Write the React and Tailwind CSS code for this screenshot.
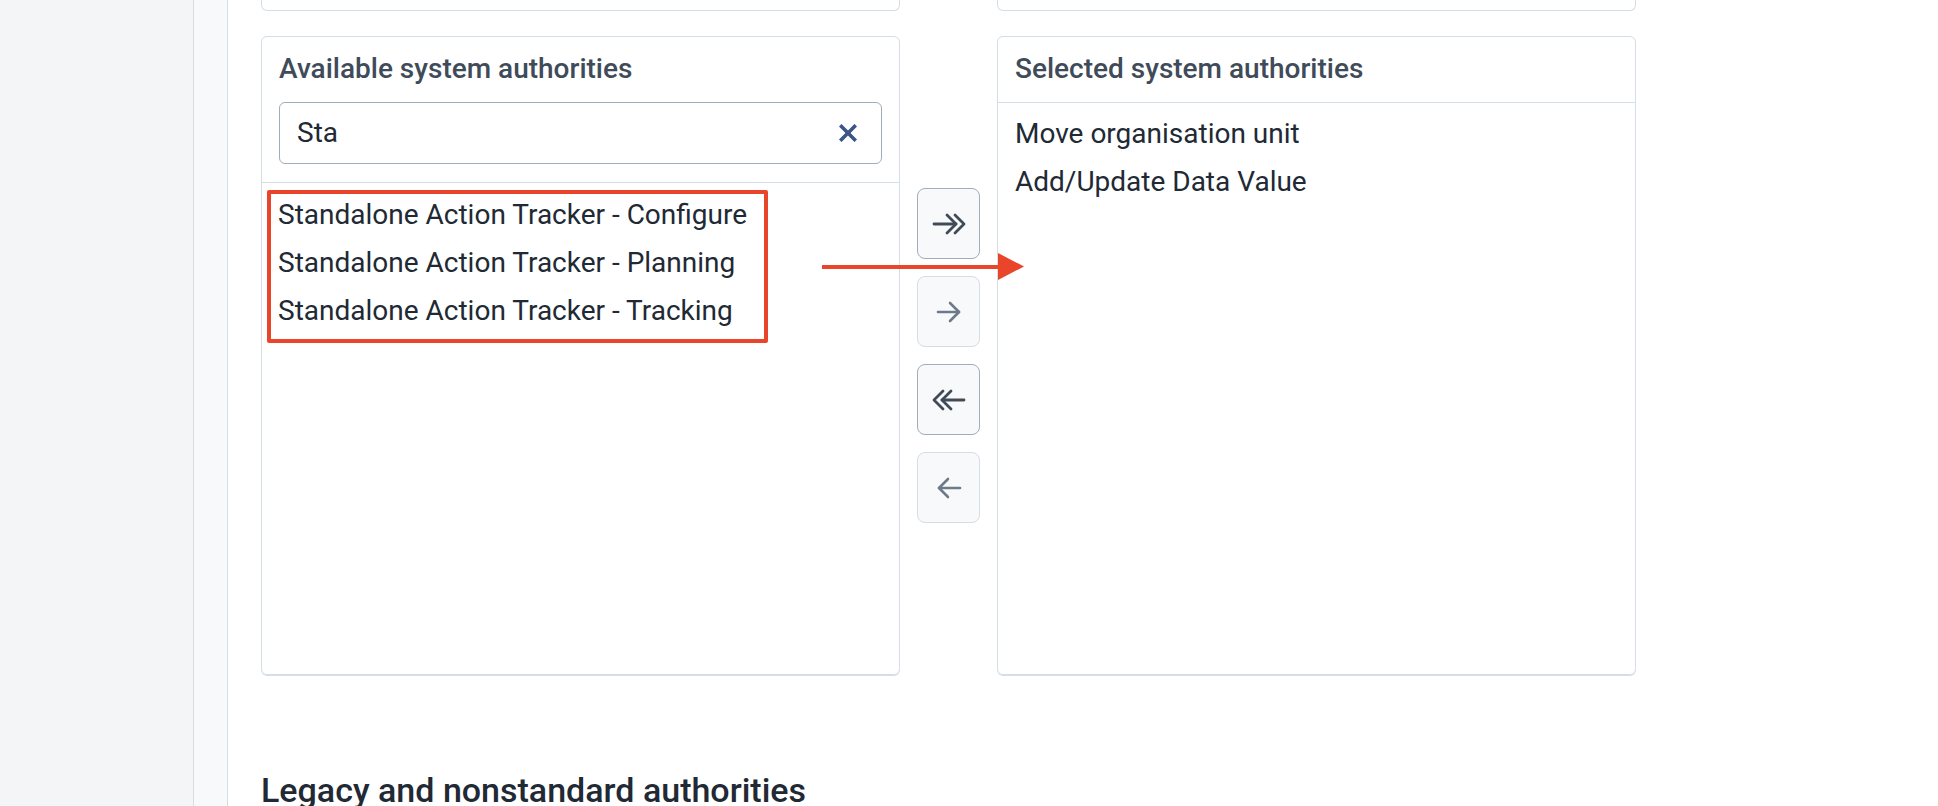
import React from "react";

const DoubleRight = ({ color }) => (
  <svg width="34" height="22" viewBox="0 0 34 22" fill="none" stroke={color} strokeWidth="2.8" strokeLinecap="round" strokeLinejoin="round">
    <path d="M2 11H24" />
    <path d="M15 2L24 11L15 20" />
    <path d="M23 2L32 11L23 20" />
  </svg>
);
const DoubleLeft = ({ color }) => (
  <svg width="34" height="22" viewBox="0 0 34 22" fill="none" stroke={color} strokeWidth="2.8" strokeLinecap="round" strokeLinejoin="round">
    <path d="M32 11H10" />
    <path d="M19 2L10 11L19 20" />
    <path d="M11 2L2 11L11 20" />
  </svg>
);
const SingleRight = ({ color }) => (
  <svg width="26" height="24" viewBox="0 0 26 24" fill="none" stroke={color} strokeWidth="2.6" strokeLinecap="round" strokeLinejoin="round">
    <path d="M2 12H23" />
    <path d="M14 3L23 12L14 21" />
  </svg>
);
const SingleLeft = ({ color }) => (
  <svg width="26" height="24" viewBox="0 0 26 24" fill="none" stroke={color} strokeWidth="2.6" strokeLinecap="round" strokeLinejoin="round">
    <path d="M24 12H3" />
    <path d="M12 3L3 12L12 21" />
  </svg>
);

function TransferButton({ enabled, children }) {
  return (
    <div
      className={
        enabled
          ? "flex h-[71px] w-[63px] items-center justify-center rounded-[8px] border border-[#a0adba] bg-[#f8f9fa]"
          : "flex h-[71px] w-[63px] items-center justify-center rounded-[8px] border border-[#d5dde5] bg-[#f8f9fa]"
      }
    >
      {children}
    </div>
  );
}

export default function App() {
  return (
    <div className="flex h-[806px] w-[1938px] overflow-hidden bg-white font-['Roboto','Liberation_Sans',sans-serif]">
      <div className="w-[194px] shrink-0 border-r border-[#d5dde5] bg-[#f4f5f7]" />
      <div className="w-[34px] shrink-0 border-r border-[#d5dde5] bg-[#f8f9fa]" />
      <div className="flex flex-1 flex-col pl-[33px]">
        {/* top cut-off boxes */}
        <div className="flex">
          <div className="h-[11px] w-[639px] rounded-b-[6px] border-x border-b border-[#d5dde5]" />
          <div className="w-[97px]" />
          <div className="h-[11px] w-[639px] rounded-b-[6px] border-x border-b border-[#d5dde5]" />
        </div>

        {/* transfer row */}
        <div className="relative mt-[25px] flex">
          <div className="relative flex h-[639px] w-[639px] flex-col rounded-[6px] border border-[#d5dde5] shadow-[0_1px_0_#d5dde5]">
            <div className="border-b border-[#d5dde5] px-[17px] pb-[18px] pt-[14px]">
              <div className="text-[28px] font-medium leading-[36px] text-[#404b5a]">
                Available system authorities
              </div>
              <div className="mt-[15px] flex h-[62px] items-center rounded-[6px] border border-[#a0adba] pl-[17px] pr-[24px]">
                <span className="flex-1 text-[28px] leading-[36px] text-[#212934]">Sta</span>
                <svg width="18" height="18" viewBox="0 0 18 18" fill="none" stroke="#3d5486" strokeWidth="3.6" strokeLinecap="square">
                  <path d="M2.5 2.5L15.5 15.5" />
                  <path d="M15.5 2.5L2.5 15.5" />
                </svg>
              </div>
            </div>
            <div className="flex flex-col px-[16px] pt-[8px] text-[28px] leading-[48px] text-[#212934]">
              <div>Standalone Action Tracker - Configure</div>
              <div>Standalone Action Tracker - Planning</div>
              <div>Standalone Action Tracker - Tracking</div>
            </div>
            {/* annotation rectangle */}
            <div className="pointer-events-none absolute left-[5px] top-[153px] h-[153px] w-[501px] rounded-[2px] border-[4px] border-[#e8452b]" />
          </div>

          <div className="flex w-[97px] flex-col items-center gap-[17px] pt-[152px]">
            <TransferButton enabled>
              <DoubleRight color="#404b5a" />
            </TransferButton>
            <TransferButton>
              <SingleRight color="#6e7a8a" />
            </TransferButton>
            <TransferButton enabled>
              <DoubleLeft color="#404b5a" />
            </TransferButton>
            <TransferButton>
              <SingleLeft color="#6e7a8a" />
            </TransferButton>
          </div>

          <div className="flex h-[639px] w-[639px] flex-col rounded-[6px] border border-[#d5dde5] shadow-[0_1px_0_#d5dde5]">
            <div className="border-b border-[#d5dde5] px-[17px] pb-[15px] pt-[14px]">
              <div className="text-[28px] font-medium leading-[36px] text-[#404b5a]">
                Selected system authorities
              </div>
            </div>
            <div className="flex flex-col px-[17px] pt-[7px] text-[28px] leading-[48px] text-[#212934]">
              <div>Move organisation unit</div>
              <div>Add/Update Data Value</div>
            </div>
          </div>

          {/* annotation arrow */}
          <div className="pointer-events-none absolute left-[561px] top-[229px] h-[4px] w-[178px] bg-[#e8452b]" />
          <svg className="pointer-events-none absolute left-[737px] top-[217px]" width="26" height="27" viewBox="0 0 26 27">
            <path d="M0 0L26 13.5L0 27Z" fill="#e8452b" />
          </svg>
        </div>

        <h2 className="mt-[95px] text-[34px] font-medium leading-[40px] text-[#212934]">
          Legacy and nonstandard authorities
        </h2>
      </div>
    </div>
  );
}
